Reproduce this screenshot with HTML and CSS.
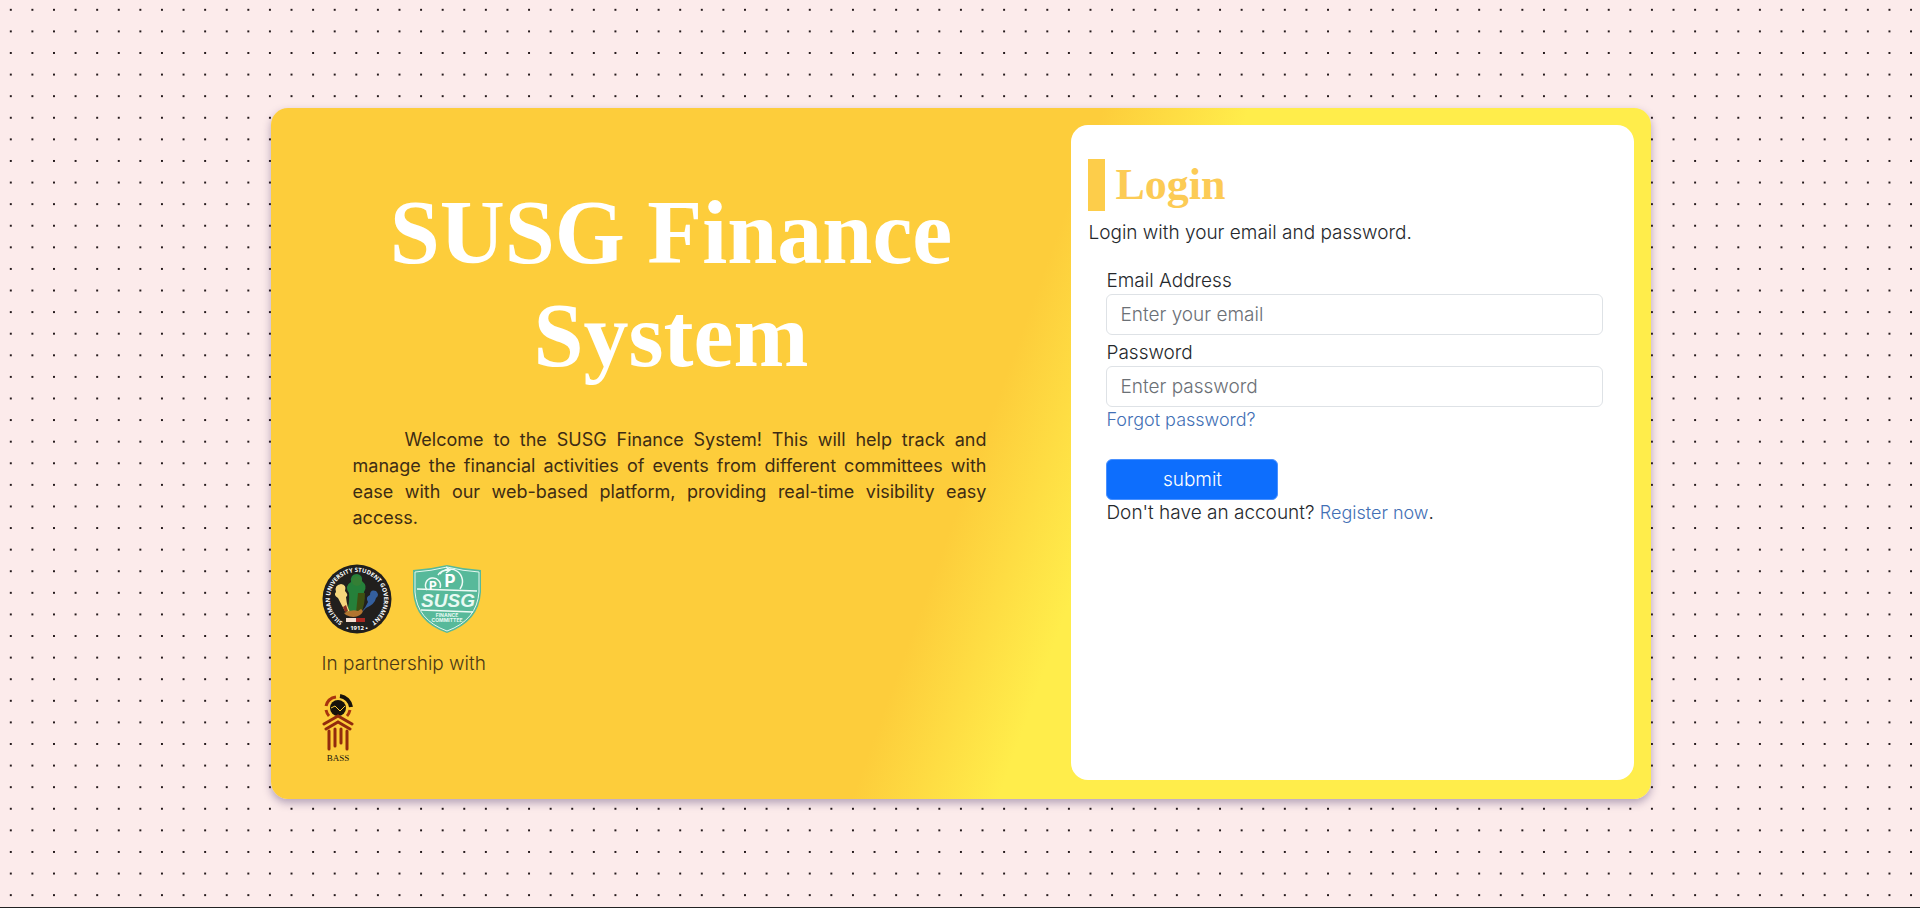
FILE: index.html
```html
<!DOCTYPE html>
<html lang="en">
<head>
<meta charset="utf-8">
<meta name="viewport" content="width=device-width, initial-scale=1">
<title>SUSG Finance System</title>
<link rel="stylesheet" href="styles.css">
</head>
<body class="page">
<main class="card">
  <section class="intro">
    <h1 class="title">SUSG Finance System</h1>
    <p class="welcome">Welcome to the SUSG Finance System! This will help track and manage the financial activities of events from different committees with ease with our web-based platform, providing real-time visibility easy access.</p>
    <div class="logos">
      <svg class="logo" viewBox="0 0 70 70" role="img" aria-label="Silliman University Student Government">
        <defs><path id="ring" d="M20 57.500A27 27 0 1 1 50 57.500"/></defs>
        <circle cx="35" cy="35" r="34.500" fill="#211f1d"/>
        <path d="M24 49Q28 40 27 29Q22 22 29 18Q28 10 35 10Q41 11 40 17Q46 22 42 28Q42 40 39 49Z" fill="#25803a"/>
        <path d="M34 49L36 29H43Q43 41 39 49Z" fill="#3f4f12"/>
        <path d="M39 49Q44 43 46 38Q43 33 48 31Q48 25 54 27Q58 31 54 34Q53 40 44 44Z" fill="#345f9e"/>
        <path d="M23 47Q20 42 16 34Q11 31 14 28Q12 21 19 20Q25 21 23 27Q27 31 24 33Q25 43 28 48Z" fill="#f6d77d"/>
        <circle cx="35" cy="17" r="5" fill="#347f35"/>
        <path d="M21 43l2 5 3-1-2-6z" fill="#8b3020"/>
        <path d="M22 49Q30 45 36 47L39 45Q43 47 38 51Q32 55 24 51Z" fill="#b2752f"/>
        <path d="M24 54h10v4H24z" fill="#f4ded0"/><path d="M34 54h9v4h-9z" fill="#a92822"/>
        <text class="seal-text"><textPath href="#ring" startOffset="50%">SILLIMAN UNIVERSITY STUDENT GOVERNMENT</textPath></text>
        <text class="seal-year" x="35" y="66">• 1912 •</text>
      </svg>
      <svg class="logo" viewBox="0 0 70 70" role="img" aria-label="SUSG Finance Committee">
        <path d="M1 6Q18 5 35 1Q52 5 69 6V28Q67 58 35 69Q3 58 1 28Z" fill="#57b99a"/>
        <path d="M3 8Q19 7 35 3Q51 7 67 8V28Q65 56 35 67Q5 56 3 28Z" fill="none" stroke="#e5f7ef"/>
        <g fill="none" stroke="#eefaf5" stroke-width="1.500"><path d="M15 26a7.500 7.500 0 1 1 13-2M28 10a12 12 0 1 1 20 15M26 11Q29 6 37 6M34 3l4 3-4 3"/><path d="M5 25L65 27M9 46L61 48"/></g>
        <text class="coin" x="21" y="26">P</text><text class="coin coin-large" x="38" y="23">P</text>
        <text class="shield-name" x="36" y="43">SUSG</text>
        <text class="shield-small" x="35" y="53">FINANCE</text><text class="shield-small" x="35" y="58">COMMITTEE</text>
      </svg>
    </div>
    <p class="partner">In partnership with</p>
    <svg class="bass" viewBox="0 0 32 68" role="img" aria-label="BASS">
      <g fill="none" stroke-width="3"><path d="M4 12A12 12 0 0 1 14 3" stroke="#a8330e"/><path d="M18 2A13 13 0 0 1 29 13" stroke="#17120b" stroke-width="4"/><path d="M4 16Q5 20 7 22M28 16Q27 20 25 22" stroke="#a8330e"/></g>
      <circle cx="16" cy="14" r="8" fill="#17120b"/>
      <path d="M9 14l4-2 5 5 5-5" fill="none" stroke="#fccc38"/>
      <g fill="none" stroke="#922b0d" stroke-width="3" stroke-linecap="round"><path d="M2 30L16 22L30 30M4 35L16 28L28 35"/><path d="M7 37V55M13 35V52M19 35V49M25 37V55"/></g>
      <text class="bass-name" x="16" y="67">BASS</text>
    </svg>
  </section>
  <section class="side">
    <div class="panel">
      <h2 class="heading">Login</h2>
      <p class="lead">Login with your email and password.</p>
      <form class="form">
        <label for="email">Email Address</label>
        <input class="field" id="email" type="email" placeholder="Enter your email">
        <label class="next" for="password">Password</label>
        <input class="field" id="password" type="password" placeholder="Enter password">
        <a class="link" href="#forgot">Forgot password?</a>
        <button class="submit" type="submit">submit</button>
        <p class="register">Don't have an account? <a class="link" href="#register">Register now</a>.</p>
      </form>
    </div>
  </section>
</main>
</body>
</html>
```
FILE: styles.css
```css
* { box-sizing: border-box; }
.page {
  margin: 0;
  padding-left: 2px;
  min-height: 100vh;
  display: flex;
  align-items: center;
  justify-content: center;
  border-bottom: 1px solid #222;
  font: 300 19px/26px Inter, sans-serif;
  color: #25282c;
  background: #fcebeb radial-gradient(circle, #24191b 1px, transparent 1px) 0 -1px / 1.125vw 1.125vw;
}
.card {
  width: 72%;
  display: grid;
  grid-template-columns: 58% 42%;
  border-radius: 17px;
  background: linear-gradient(110deg, #fdcd3b 51%, #ffed4b 60%);
  box-shadow: 0 4px 8px rgba(50, 30, 90, .35);
}
.intro { padding: 73px 51px 37px; }
.title {
  margin: 0;
  padding: 0 40px;
  font: 700 90px/103px "Liberation Serif", serif;
  text-align: center;
  color: #fff;
}
.welcome {
  margin: 40px 34px 0 31px;
  font-size: 18px;
  font-weight: 400;
  text-align: justify;
  text-indent: 52px;
  color: #3d2c14;
}
.logos { display: flex; gap: 20px; margin-top: 33px; }
.logo { width: 70px; height: 70px; }
.partner { margin: 17px 0; color: #4b3814; }
.bass { display: block; width: 32px; height: 68px; }
.side { display: flex; padding: 17px 17px 19px 0; }
.panel { flex: 1; padding: 34px 17px; background: #fff; border-radius: 17px; }
.heading {
  margin: 0;
  padding-left: 10px;
  border-left: 17px solid #fdcd4a;
  font: 700 44px/52px "Liberation Serif", serif;
  color: #fccb55;
}
.lead { margin: 9px 0 0; }
.form { display: flex; flex-direction: column; align-items: flex-start; padding: 22px 14px 0 18px; }
.field {
  width: 100%;
  height: 41px;
  padding: 0 13px;
  border: 1px solid #dee2e6;
  border-radius: 6px;
  background: #fff;
  font: inherit;
  color: inherit;
}
.field::placeholder { color: #6b7076; opacity: 1; }
.next { margin-top: 5px; }
.link { font-size: 18px; color: #426fb5; text-decoration: none; }
.submit {
  width: 172px;
  height: 41px;
  margin-top: 26px;
  border: 1px solid #4a91ff;
  border-radius: 6px;
  background: #0d6efd;
  color: #fff;
  font: inherit;
}
.register { margin: 0; }
.seal-text, .seal-year { font: 700 6px "Open Sans", sans-serif; fill: #fff; text-anchor: middle; }
.coin { font: 700 12px Inter, sans-serif; fill: #fff; text-anchor: middle; }
.coin-large { font-size: 17px; }
.shield-name { font: italic 700 19px "Liberation Sans", sans-serif; fill: #e8faf3; text-anchor: middle; }
.shield-small { font: 700 5px Inter, sans-serif; fill: #e8faf3; text-anchor: middle; }
.bass-name { font: 400 9px "Liberation Serif", serif; fill: #17120b; text-anchor: middle; }
```
